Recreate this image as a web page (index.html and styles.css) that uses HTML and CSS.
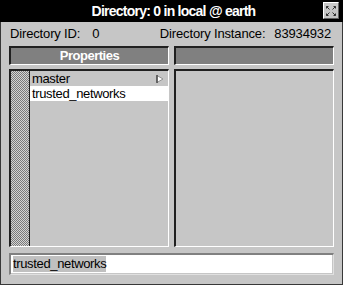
FILE: index.html
```html
<!DOCTYPE html>
<html>
<head>
<meta charset="utf-8">
<link rel="stylesheet" href="styles.css">
</head>
<body>
<div class="window">
  <div class="titlebar">
    <span class="title">Directory: 0 in local @ earth</span>
    <span class="close">
      <svg width="14" height="14" viewBox="0 0 14 14">
        <g stroke="#303030" stroke-width="1" fill="none">
          <path d="M2.5 2.5 L5.5 5.5 M2.5 2.5 h2 M2.5 2.5 v2"/>
          <path d="M11.5 2.5 L8.5 5.5 M11.5 2.5 h-2 M11.5 2.5 v2"/>
          <path d="M2.5 11.5 L5.5 8.5 M2.5 11.5 h2 M2.5 11.5 v-2"/>
          <path d="M11.5 11.5 L8.5 8.5 M11.5 11.5 h-2 M11.5 11.5 v-2"/>
        </g>
      </svg>
    </span>
  </div>
  <div class="info">
    <span>Directory ID:<span class="sp"></span>0</span>
    <span>Directory Instance:<span class="sp2"></span>83934932</span>
  </div>
  <div class="columns">
    <div class="col">
      <div class="header">Properties</div>
      <div class="panel">
        <svg class="stipple" width="18" height="175">
          <defs>
            <pattern id="chk" width="2" height="2" patternUnits="userSpaceOnUse">
              <rect width="2" height="2" fill="#d4d4d4"/>
              <rect width="1" height="1" fill="#7a7a7a"/>
              <rect x="1" y="1" width="1" height="1" fill="#7a7a7a"/>
            </pattern>
          </defs>
          <rect width="18" height="175" fill="url(#chk)"/>
        </svg>
        <div class="items">
          <div class="item">master
            <svg class="arrow" width="8" height="8" viewBox="0 0 8 8">
              <polygon points="1,0.5 7,4 1,7.5" fill="#fff" stroke="#909090" stroke-width="1"/>
              <line x1="1" y1="0" x2="1" y2="8" stroke="#303030" stroke-width="1.2"/>
            </svg>
          </div>
          <div class="item selected">trusted_networks</div>
        </div>
      </div>
    </div>
    <div class="col">
      <div class="header"></div>
      <div class="panel"></div>
    </div>
  </div>
  <div class="input"><span class="sel">trusted_networks</span></div>
</div>
</body>
</html>
```

FILE: styles.css
```css
html, body {
  margin: 0;
  padding: 0;
  background: #c6c6c6;
}
.window {
  box-sizing: border-box;
  width: 343px;
  height: 285px;
  border: 1px solid #383838;
  border-top: none;
  background: #c6c6c6;
  font-family: "Liberation Sans", Arial, sans-serif;
  color: #000;
  display: flex;
  flex-direction: column;
}
.titlebar {
  position: relative;
  height: 22px;
  margin: 0 -1px;
  background: #000;
  color: #fff;
  display: flex;
  align-items: center;
  justify-content: center;
}
.title {
  font-weight: bold;
  font-size: 14px;
  letter-spacing: -0.75px;
  padding-left: 4px;
}
.close {
  position: absolute;
  right: 4px;
  top: 2px;
  width: 16px;
  height: 17px;
  box-sizing: border-box;
  background: #c6c6c6;
  border: 1px solid;
  border-color: #fff #606060 #606060 #fff;
  display: flex;
  align-items: center;
  justify-content: center;
}
.info {
  height: 24px;
  display: flex;
  justify-content: space-between;
  align-items: flex-end;
  padding: 0 11px 5px 9px;
  font-size: 13px;
  line-height: 15px;
  letter-spacing: -0.15px;
  box-sizing: border-box;
}
.sp {
  display: inline-block;
  width: 12px;
}
.sp2 {
  display: inline-block;
  width: 9px;
}
.columns {
  display: grid;
  grid-template-columns: 1fr 1fr;
  column-gap: 5px;
  padding: 0 8px;
}
.col {
  display: flex;
  flex-direction: column;
  gap: 4px;
}
.header {
  box-sizing: border-box;
  height: 19px;
  background: #808080;
  border-style: solid;
  border-width: 2px 1px 1px 2px;
  border-color: #202020 #fff #fff #202020;
  color: #fff;
  font-weight: bold;
  font-size: 13px;
  letter-spacing: -0.5px;
  line-height: 15px;
  text-align: center;
}
.panel {
  box-sizing: border-box;
  height: 178px;
  border-style: solid;
  border-width: 2px 1px 1px 2px;
  border-color: #202020 #fff #fff #202020;
  display: flex;
}
.stipple {
  display: block;
  flex: none;
  width: 18px;
  height: 100%;
  border-right: 1px solid #202020;
}
.items {
  flex: 1;
}
.item {
  position: relative;
  height: 15px;
  font-size: 13px;
  line-height: 15px;
  padding-left: 2px;
  letter-spacing: -0.35px;
}
.item.selected {
  background: #fff;
}
.arrow {
  position: absolute;
  right: 4px;
  top: 4px;
}
.input {
  box-sizing: border-box;
  margin: 6px 8px 0 8px;
  height: 22px;
  background: #fff;
  border-style: solid;
  border-width: 2px 1px 1px 2px;
  border-color: #808080 #e0e0e0 #e0e0e0 #808080;
  box-shadow: inset -1px -1px 0 #c6c6c6;
  padding: 1px 0 0 2px;
  font-size: 13px;
  line-height: 16px;
  letter-spacing: -0.35px;
}
.sel {
  background: #c0c0c0;
  display: inline-block;
  height: 16px;
}
```
